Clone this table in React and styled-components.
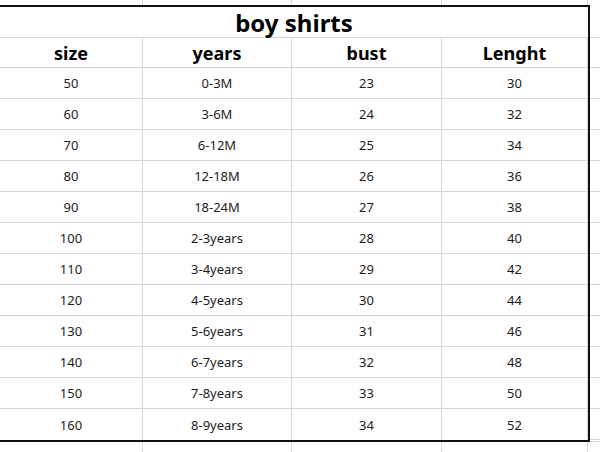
import React from 'react';
import styled, { createGlobalStyle } from 'styled-components';

const GlobalStyle = createGlobalStyle`
  html, body {
    margin: 0;
    padding: 0;
    background: #ffffff;
  }
  body {
    font-family: "Noto Sans", "Open Sans", Arial, sans-serif;
    color: #000;
  }
`;

const COLS = '143px 149px 150px 146px 12px';

const Sheet = styled.div`
  width: 600px;
  height: 452px;
  overflow: hidden;
  display: flex;
  flex-direction: column;
`;

const Strip = styled.div`
  display: grid;
  grid-template-columns: ${COLS};
  height: ${p => p.h}px;
  flex-shrink: 0;
`;

const StripCell = styled.div`
  border-right: 1px solid #d6d6d6;
`;

const Body = styled.div`
  display: flex;
  align-items: flex-start;
  flex-shrink: 0;
`;

const Table = styled.div`
  width: 588px;
  flex-shrink: 0;
  border-top: 2px solid #111;
  border-right: 2px solid #111;
  border-bottom: 2px solid #111;
  display: grid;
  grid-template-columns: 143px 149px 150px 146px;
  box-sizing: content-box;
`;

const Title = styled.div`
  grid-column: 1 / -1;
  display: flex;
  align-items: center;
  justify-content: center;
  font-size: 24px;
  font-weight: 700;
  border-bottom: 1px solid #d6d6d6;
  box-sizing: border-box;
  height: 31px;
  padding-top: 1px;
`;

const Cell = styled.div`
  display: flex;
  align-items: center;
  justify-content: center;
  box-sizing: border-box;
  height: ${p => (p.head ? 30 : 31)}px;
  border-right: 1px solid #d6d6d6;
  border-bottom: ${p => (p.last ? 'none' : '1px solid #d6d6d6')};
  font-size: ${p => (p.head ? '18px' : '13px')};
  font-weight: ${p => (p.head ? 700 : 400)};
  color: ${p => (p.head ? '#000' : '#1c1c1c')};
`;

const Side = styled.div`
  flex: 1;
  display: flex;
  flex-direction: column;
  padding-top: 2px;
`;

const SideCell = styled.div`
  height: ${p => p.h}px;
  box-sizing: border-box;
  border-bottom: 1px solid #d6d6d6;
  flex-shrink: 0;
`;

const rows = [
  ['50', '0-3M', '23', '30'],
  ['60', '3-6M', '24', '32'],
  ['70', '6-12M', '25', '34'],
  ['80', '12-18M', '26', '36'],
  ['90', '18-24M', '27', '38'],
  ['100', '2-3years', '28', '40'],
  ['110', '3-4years', '29', '42'],
  ['120', '4-5years', '30', '44'],
  ['130', '5-6years', '31', '46'],
  ['140', '6-7years', '32', '48'],
  ['150', '7-8years', '33', '50'],
  ['160', '8-9years', '34', '52'],
];

const headers = ['size', 'years', 'bust', 'Lenght'];

export default function App() {
  const sideHeights = [31, 30, ...rows.map(() => 31), 2];
  return (
    <>
      <GlobalStyle />
      <Sheet>
        <Strip h={5}>
          <StripCell />
          <StripCell />
          <StripCell />
          <StripCell />
          <div />
        </Strip>
        <Body>
          <Table>
            <Title>boy shirts</Title>
            {headers.map(h => (
              <Cell head key={h}>{h}</Cell>
            ))}
            {rows.map((r, i) =>
              r.map((v, j) => (
                <Cell key={`${i}-${j}`} last={i === rows.length - 1}>{v}</Cell>
              ))
            )}
          </Table>
          <Side>
            {sideHeights.map((h, i) => (
              <SideCell key={i} h={h} />
            ))}
          </Side>
        </Body>
        <Strip h={20}>
          <StripCell />
          <StripCell />
          <StripCell />
          <StripCell />
          <div />
        </Strip>
      </Sheet>
    </>
  );
}
